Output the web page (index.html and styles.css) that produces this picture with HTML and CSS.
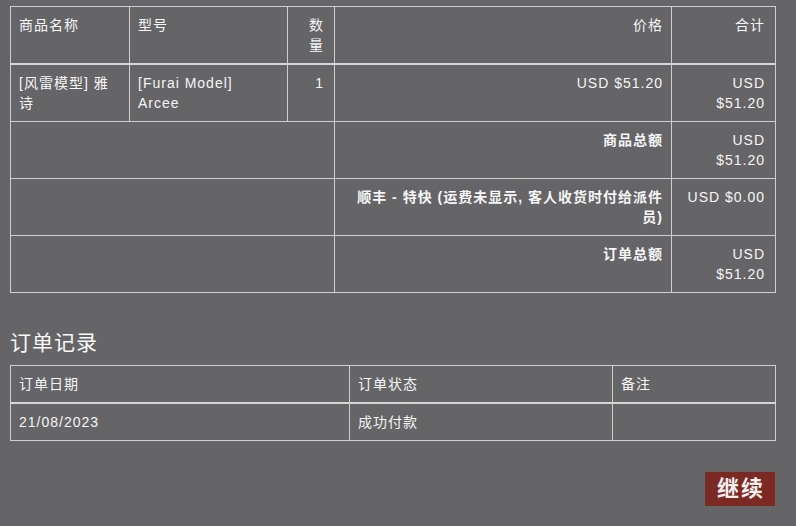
FILE: index.html
```html
<!DOCTYPE html>
<html lang="zh">
<head>
<meta charset="utf-8">
<title>订单详情</title>
<link rel="stylesheet" href="styles.css">
</head>
<body>
<div class="page">
  <table class="grid products">
    <colgroup>
      <col class="c-name"><col class="c-model"><col class="c-qty"><col class="c-price"><col class="c-total">
    </colgroup>
    <thead>
      <tr>
        <th>商品名称</th>
        <th>型号</th>
        <th class="r qty">数量</th>
        <th class="r">价格</th>
        <th class="r last">合计</th>
      </tr>
    </thead>
    <tbody>
      <tr>
        <td>[风雷模型] 雅诗</td>
        <td>[Furai Model] Arcee</td>
        <td class="r qty">1</td>
        <td class="r">USD $51.20</td>
        <td class="r last">USD $51.20</td>
      </tr>
      <tr>
        <td colspan="3"></td>
        <td class="r b">商品总额</td>
        <td class="r last">USD $51.20</td>
      </tr>
      <tr>
        <td colspan="3"></td>
        <td class="r b">顺丰 - 特快 (运费未显示, 客人收货时付给派件员)</td>
        <td class="r last">USD $0.00</td>
      </tr>
      <tr>
        <td colspan="3"></td>
        <td class="r b">订单总额</td>
        <td class="r last">USD $51.20</td>
      </tr>
    </tbody>
  </table>

  <h2 class="section-title">订单记录</h2>

  <table class="grid history">
    <colgroup>
      <col class="h-date"><col class="h-status"><col class="h-note">
    </colgroup>
    <thead>
      <tr>
        <th>订单日期</th>
        <th>订单状态</th>
        <th>备注</th>
      </tr>
    </thead>
    <tbody>
      <tr>
        <td>21/08/2023</td>
        <td>成功付款</td>
        <td></td>
      </tr>
    </tbody>
  </table>

  <div class="actions">
    <a class="btn" href="#">继续</a>
  </div>
</div>
</body>
</html>
```

FILE: styles.css
```css
html, body {
  margin: 0;
  padding: 0;
  background: #656466;
}

body {
  font-family: "Liberation Sans", Arial, "Noto Sans CJK SC", sans-serif;
  font-size: 14px;
  color: #f6f6f6;
  letter-spacing: 1px;
}

.page {
  width: 765px;
  padding: 6px 0 0 10px;
}

.grid {
  width: 765px;
  border-collapse: collapse;
  table-layout: fixed;
}

.grid th,
.grid td {
  border: 1px solid #cfcfcf;
  padding: 8px 12px 8px 8px;
  line-height: 20px;
  vertical-align: top;
  text-align: left;
  font-weight: normal;
}

.grid thead th {
  border-bottom: 2px solid #d6d6d6;
}

.grid .r {
  text-align: right;
  padding-left: 8px;
  padding-right: 8px;
}
.grid .r.qty { padding-right: 10px; }
.grid .r.last { padding-right: 10px; }
.grid .b { font-weight: bold; }

.c-name { width: 119px; }
.c-model { width: 158px; }
.c-qty { width: 47px; }
.c-price { width: 337px; }
.c-total { width: 104px; }

.h-date { width: 339px; }
.h-status { width: 263px; }
.h-note { width: 163px; }

.section-title {
  margin: 35px 0 7px 0;
  font-size: 21px;
  line-height: 30px;
  font-weight: normal;
  letter-spacing: 1px;
  color: #f8f8f8;
}

.actions {
  display: flex;
  justify-content: flex-end;
  margin-top: 31px;
}

.btn {
  display: block;
  background: #7b2923;
  color: #f4eeee;
  text-decoration: none;
  font-size: 22px;
  font-weight: bold;
  line-height: 34px;
  height: 34px;
  padding: 0 10px 0 12px;
  letter-spacing: 2px;
}
```
